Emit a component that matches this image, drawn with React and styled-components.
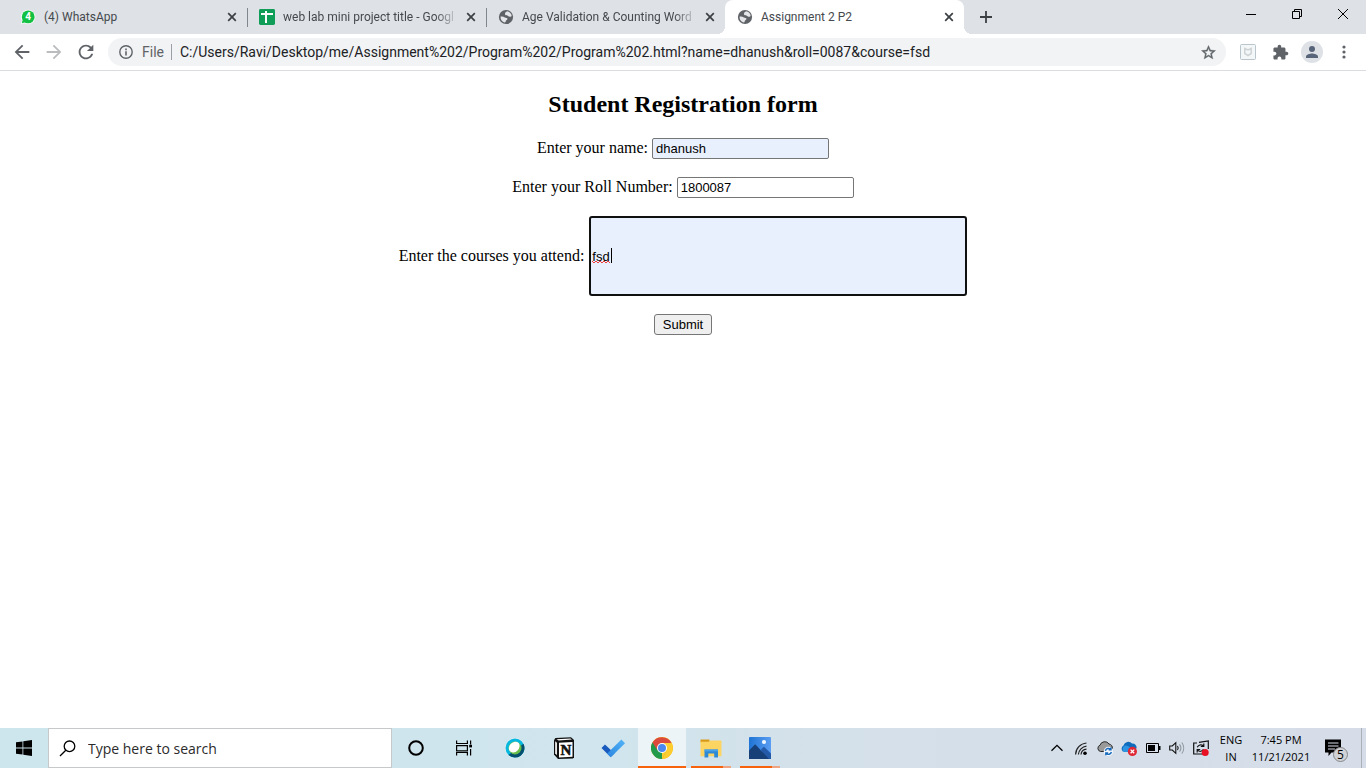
import React from 'react';
import styled, { createGlobalStyle, css } from 'styled-components';

const GlobalStyle = createGlobalStyle`
  *, *::before, *::after { box-sizing: border-box; }
  body { margin: 0; background: #fff; }
  button, input { font-family: inherit; margin: 0; }
  svg { display: block; flex: none; }
`;

const browserFont = 'Roboto, "Open Sans", sans-serif';
const taskbarFont = '"Open Sans", "Noto Sans", sans-serif';

const Screen = styled.div`
  min-height: 100vh;
  display: flex;
  flex-direction: column;
`;

/* ---------- browser chrome ---------- */

const Browser = styled.header`
  font-family: ${browserFont};
`;

const TabStrip = styled.div`
  display: flex;
  height: 34px;
  padding-left: 8px;
  background: #dee1e6;
`;

const Tabs = styled.div`
  display: flex;
  flex: 0 1 956px;
  min-width: 0;
`;

const Tab = styled.div`
  position: relative;
  display: flex;
  align-items: center;
  flex: 1 1 0;
  min-width: 0;
  padding: 0 7px 0 12px;
  color: #45494d;

  ${({ $divider }) => $divider && css`
    &::after {
      content: '';
      position: absolute;
      right: -1px;
      top: 8px;
      width: 1px;
      height: 19px;
      background: #80868b;
    }
  `}

  ${({ $active }) => $active && css`
    background: #fff;
    border-radius: 8px 8px 0 0;
    &::before, &::after {
      content: '';
      position: absolute;
      bottom: 0;
      width: 8px;
      height: 8px;
    }
    &::before {
      left: -8px;
      background: radial-gradient(circle at 0 0, transparent 8px, #fff 8px);
    }
    &::after {
      right: -8px;
      background: radial-gradient(circle at 100% 0, transparent 8px, #fff 8px);
    }
  `}
`;

const TabTitle = styled.button`
  flex: 1;
  min-width: 0;
  height: 34px;
  padding: 0;
  margin-left: 8px;
  border: 0;
  background: none;
  color: inherit;
  font-size: 12px;
  line-height: 16px;
  text-align: left;
  white-space: nowrap;
  overflow: hidden;
  ${({ $fade }) => $fade && css`
    mask-image: linear-gradient(to right, #000 calc(100% - 24px), transparent);
  `}
`;

const IconButton = styled.button`
  display: flex;
  align-items: center;
  justify-content: center;
  flex: none;
  width: ${({ $w }) => $w || 28}px;
  height: ${({ $h }) => $h || 28}px;
  padding: 0;
  border: 0;
  border-radius: ${({ $round }) => ($round ? '50%' : '0')};
  background: none;
  color: ${({ $color }) => $color || '#5f6368'};
`;

const TabClose = styled(IconButton)`
  margin-left: 4px;
`;

const WindowControls = styled.div`
  display: flex;
  margin-left: auto;
`;

const Toolbar = styled.div`
  display: flex;
  align-items: center;
  gap: 8px;
  height: 37px;
  padding: 0 8px;
  background: #fff;
  border-bottom: 1px solid #dadce0;
`;

const ToolGroup = styled.div`
  display: flex;
  align-items: center;
  gap: 4px;
`;

const Omnibox = styled.div`
  display: flex;
  align-items: center;
  flex: 1;
  min-width: 0;
  height: 28px;
  padding: 0 4px 0 10px;
  border-radius: 14px;
  background: #f1f3f4;
  color: #5f6368;
`;

const Scheme = styled.label`
  padding: 0 7px 0 8px;
  font-size: 14px;
  line-height: 16px;
  border-right: 1px solid #9aa0a6;
`;

const UrlInput = styled.input`
  flex: 1;
  min-width: 0;
  height: 28px;
  padding: 0 0 0 8px;
  border: 0;
  outline: 0;
  background: none;
  color: #202124;
  font-size: 14px;
`;

/* ---------- page ---------- */

const Page = styled.main`
  flex: 1;
  padding: 19px 8px;
  font-family: "Liberation Serif", "Times New Roman", serif;
  font-size: 16px;
  color: #000;
`;

const Heading = styled.h2`
  margin: 0 0 20px;
  font-size: 24px;
  line-height: 28px;
  text-align: center;
`;

const Form = styled.form`
  display: flex;
  flex-direction: column;
  align-items: center;
  gap: 18px;
`;

const Field = styled.div`
  display: flex;
  align-items: baseline;
  gap: 4px;
`;

const TextInput = styled.input`
  width: 177px;
  height: 21px;
  padding: 1px 3px;
  border: 1px solid #767676;
  border-radius: 2px;
  background: ${({ $filled }) => ($filled ? '#e8f0fe' : '#fff')};
  color: #000;
  font-family: "Liberation Sans", Arial, sans-serif;
  font-size: 13px;
`;

const CoursesInput = styled(TextInput)`
  width: 378px;
  height: 80px;
  padding: 1px;
  border: 2px solid #101010;
  border-radius: 3px;
  outline: 0;
`;

const CoursesBox = styled.div`
  position: relative;
  display: flex;
  align-items: baseline;
  margin-left: 1px;
`;

const SpellMark = styled.svg`
  position: absolute;
  left: 3px;
  top: 44px;
`;

const Caret = styled.span`
  position: absolute;
  left: 22px;
  top: 32px;
  width: 1px;
  height: 15px;
  background: #000;
`;

const Submit = styled.button`
  width: 58px;
  height: 21px;
  padding: 0;
  border: 1px solid #767676;
  border-radius: 3px;
  background: #efefef;
  color: #000;
  font-family: "Liberation Sans", Arial, sans-serif;
  font-size: 13px;
`;

/* ---------- taskbar ---------- */

const Taskbar = styled.footer`
  display: flex;
  height: 40px;
  background: linear-gradient(to right, #cde5ec, #d0e5ed 45%, #d4e0ea 60%, #d6dde8);
  font-family: ${taskbarFont};
  color: #000;
`;

const SearchBox = styled.label`
  display: flex;
  align-items: center;
  flex: 0 1 344px;
  min-width: 0;
  gap: 12px;
  padding: 0 10px;
  border: 1px solid #c5c9ca;
  background: #fff;
`;

const SearchInput = styled.input`
  flex: 1;
  min-width: 0;
  height: 30px;
  padding: 0;
  border: 0;
  outline: 0;
  background: none;
  font-size: 14px;
  &::placeholder { color: #2b2b2b; opacity: 1; }
`;

const Apps = styled.nav`
  display: flex;
  gap: 1px;
  margin-left: 3px;
`;

const AppButton = styled.button`
  position: relative;
  display: flex;
  align-items: center;
  justify-content: center;
  width: 48px;
  height: 40px;
  padding: 0;
  border: 0;
  color: #000;
  background: ${({ $active }) => ($active ? '#edf4f7' : 'none')};

  ${({ $active, $open }) => ($active || $open) && css`
    &::after {
      content: '';
      position: absolute;
      left: ${$active ? 0 : 4}px;
      right: ${$active ? 0 : 4}px;
      bottom: 0;
      height: 2px;
      background: ${$active
        ? '#f7630c'
        : 'linear-gradient(to right, #f7630c 80%, #f0a582 80%)'};
    }
  `}
`;

const Tray = styled.div`
  display: flex;
  align-items: center;
  margin-left: auto;
`;

const TrayText = styled.div`
  width: ${({ $w }) => $w}px;
  font-size: 11px;
  line-height: 17px;
  text-align: center;
  white-space: nowrap;
`;

const ShowDesktop = styled.button`
  width: 5px;
  height: 40px;
  padding: 0;
  border: 0;
  border-left: 1px solid #aab1b9;
  background: none;
`;

/* ---------- icons ---------- */

const Glyph = ({ size = 16, box = 24, children, ...rest }) => (
  <svg width={size} height={size} viewBox={`0 0 ${box} ${box}`} fill="currentColor" aria-hidden="true" {...rest}>
    {children}
  </svg>
);

const CloseIcon = () => (
  <Glyph box={16} stroke="#3c4043" strokeWidth="1.7">
    <path d="M4.2 4.2l7.6 7.6M11.8 4.2l-7.6 7.6" />
  </Glyph>
);

const WhatsAppIcon = () => (
  <Glyph box={16}>
    <path d="M8.2.7a7.2 7.2 0 1 1-3.5 13.5L.6 15.4l1.3-3.8A7.2 7.2 0 0 1 8.2.7z" fill="#f7fbf8" />
    <circle cx="8.2" cy="7.9" r="6.4" fill="#12c143" />
    <path d="M1.8 14.2l1-3.6 2.6 2.6z" fill="#12c143" />
    <text x="8.2" y="11.4" textAnchor="middle" fontSize="10" fontWeight="700" fontFamily="Roboto, sans-serif" fill="#fff">4</text>
  </Glyph>
);

const SheetsIcon = () => (
  <Glyph box={16}>
    <rect width="16" height="16" rx="1.4" fill="#109d58" />
    <path d="M2 5h12M7 2v12" stroke="#fff" strokeWidth="2" />
  </Glyph>
);

const GlobeIcon = () => (
  <Glyph box={16}>
    <circle cx="8" cy="8" r="7.1" fill="#5f6368" />
    <path d="M2.6 7.5c1.9-.3 3.2.2 4.3.9.9.6 2.4.4 2.6 1.3.2 1-1.2 1.1-1.5 1.9-.2.7-.2 1.4-1 1.8C4.300 13 2.400 10.800 2.600 7.500z" fill="#e4e6e9" />
    <path d="M9 2.3c-.6.9-1.900 1-1.900 1.900 0 .8-.4 1.200.3 1.700.8.5 1.700.2 2.500.8.8.6 1.500 1.300 2.400 1.100.6-.1 1-.4 1.400-.7C13.500 4.600 11.600 2.500 9 2.300z" fill="#e4e6e9" />
  </Glyph>
);

const ArrowBack = (props) => (
  <Glyph size={22} {...props}>
    <path d="M20 11H7.830l5.590-5.590L12 4l-8 8 8 8 1.410-1.410L7.830 13H20v-2z" />
  </Glyph>
);

const ReloadIcon = () => (
  <Glyph size={22}>
    <path d="M17.650 6.350C16.200 4.900 14.210 4 12 4c-4.420 0-7.990 3.580-7.990 8s3.570 8 7.990 8c3.730 0 6.840-2.550 7.730-6h-2.080c-.82 2.330-3.040 4-5.650 4-3.310 0-6-2.690-6-6s2.690-6 6-6c1.660 0 3.140.69 4.220 1.780L13 11h7V4l-2.350 2.350z" />
  </Glyph>
);

const InfoIcon = () => (
  <Glyph box={16}>
    <circle cx="8" cy="8" r="6.200" fill="none" stroke="currentColor" strokeWidth="1.400" />
    <path d="M7.200 7.200h1.600v4.200H7.200zM7.200 4.600h1.600v1.600H7.200z" />
  </Glyph>
);

const StarIcon = () => (
  <Glyph size={17} stroke="currentColor" strokeWidth=".5">
    <path d="M22 9.240l-7.190-.62L12 2 9.190 8.630 2 9.240l5.460 4.730L5.820 21 12 17.270 18.180 21l-1.630-7.030L22 9.240zM12 15.400l-3.760 2.270 1-4.280-3.320-2.880 4.380-.38L12 6.100l1.710 4.040 4.380.38-3.320 2.880 1 4.280L12 15.400z" />
  </Glyph>
);

const ShieldIcon = () => (
  <Glyph box={16}>
    <rect x=".5" y=".5" width="15" height="15" rx="1" fill="#f4f7f8" stroke="#b9c5ca" />
    <path d="M4.800 4.500L8 6l3.200-1.500v5L8 11.500 4.800 9.500z" fill="none" stroke="#ced3d6" strokeWidth="1.500" />
  </Glyph>
);

const PuzzleIcon = () => (
  <Glyph size={17}>
    <path d="M20.500 11H19V7c0-1.100-.9-2-2-2h-4V3.500C13 2.120 11.880 1 10.500 1S8 2.120 8 3.500V5H4c-1.100 0-1.990.9-1.990 2v3.800H3.500c1.490 0 2.700 1.210 2.700 2.700s-1.210 2.700-2.700 2.700H2V20c0 1.100.9 2 2 2h3.800v-1.500c0-1.490 1.210-2.700 2.700-2.700 1.490 0 2.700 1.210 2.700 2.700V22H17c1.100 0 2-.9 2-2v-4h1.500c1.380 0 2.500-1.120 2.500-2.500S21.880 11 20.500 11z" />
  </Glyph>
);

const AvatarIcon = () => (
  <Glyph size={22} box={22}>
    <circle cx="11" cy="11" r="11" fill="#dee1e6" />
    <circle cx="11" cy="8" r="3" fill="#57647a" />
    <path d="M5 17v-1.600c0-2 4-3 6-3s6 1 6 3V17z" fill="#57647a" />
  </Glyph>
);

const MenuIcon = () => (
  <Glyph box={16}>
    <circle cx="8" cy="3" r="1.600" />
    <circle cx="8" cy="8" r="1.600" />
    <circle cx="8" cy="13" r="1.600" />
  </Glyph>
);

const StartIcon = () => (
  <Glyph box={16}>
    <path d="M0 2.300L6.500 1.400V7.600H0zM7.300 1.300L16 0v7.600H7.300zM0 8.400h6.500v6.200L0 13.700zM7.300 8.400H16V16l-8.700-1.300z" />
  </Glyph>
);

const SearchIcon = () => (
  <Glyph size={17} box={17} fill="none" stroke="#000" strokeWidth="1.300">
    <circle cx="10.500" cy="6.300" r="5.300" />
    <path d="M6.800 10.200L1 16" />
  </Glyph>
);

const CortanaIcon = () => (
  <Glyph fill="none" box={16} stroke="#000" strokeWidth="2">
    <circle cx="8" cy="8" r="6.800" />
  </Glyph>
);

const TaskViewIcon = () => (
  <Glyph box={16} fill="none" stroke="#000" strokeWidth="1.200">
    <path d="M.6.500v3h10.800v-3M.6 15.500v-3h10.800v3M.6 5.600h10.800v5.200H.6zM14.600.500v4M14.600 9v6.500" />
    <path d="M13.200 4.800h3v2.600h-3z" fill="#000" stroke="none" />
  </Glyph>
);

const WebexIcon = () => (
  <Glyph size={20} box={20}>
    <circle cx="10" cy="10" r="10" fill="#e6f3f7" />
    <circle cx="10" cy="10" r="9.500" fill="#07b7e0" />
    <path d="M18.500 5.800A9.500 9.500 0 0 1 3.500 17z" fill="#04506e" />
    <circle cx="10" cy="10" r="6.500" fill="#6abf4b" />
    <ellipse cx="9.200" cy="9.100" rx="6" ry="4.700" fill="#fff" transform="rotate(-45 9.200 9.100)" />
  </Glyph>
);

const NotionIcon = () => (
  <Glyph size={22} box={22}>
    <path d="M1 3.200L2.400 1l15.600-.8 3 2.800v17.200l-1 1.200-15 .6L1 17.500z" fill="#111" />
    <path d="M3.500 2.200l13.800-.8 1.600 1.200-13.200.8z" fill="#fff" />
    <path d="M2.200 4.200l1.700 1.500v12.500L2.200 16.300z" fill="#fff" />
    <path d="M6 5.700l13.500-.8v14.800L6 20.400z" fill="#fff" />
    <text x="12.800" y="18" textAnchor="middle" fontSize="15" fontWeight="700" fontFamily="Liberation Serif, serif" fill="#111" stroke="#111" strokeWidth=".6">N</text>
  </Glyph>
);

const TodoIcon = () => (
  <Glyph size={24}>
    <defs>
      <linearGradient id="todo" x1="0" y1="1" x2="1" y2="0">
        <stop offset="0" stopColor="#2a86e0" />
        <stop offset="1" stopColor="#53b4f7" />
      </linearGradient>
    </defs>
    <path d="M4 8.500L.500 12l9 9 4-3.500z" fill="#185abd" />
    <path d="M20.400 3.500L24 7.200 9.800 21.200 6.200 17.500z" fill="url(#todo)" />
  </Glyph>
);

const ChromeIcon = () => (
  <Glyph size={22} box={22}>
    <circle cx="11" cy="11" r="11" fill="#fbc116" />
    <path d="M11 11L1.470 5.500A11 11 0 0 0 11 22l5-8z" fill="#229a4c" />
    <path d="M11 11V6h9.530A11 11 0 0 0 1.470 5.500L6.700 13.500z" fill="#db4a3c" />
    <path d="M11 22l4.800-8.300L20.500 6H11v5z" fill="#fdcc2f" />
    <path d="M20.530 6A11 11 0 0 1 11 22l4.600-8.200z" fill="#fdcc2f" />
    <circle cx="11" cy="11" r="5" fill="#fff" />
    <circle cx="11" cy="11" r="4" fill="#4b87ee" />
  </Glyph>
);

const ExplorerIcon = () => (
  <Glyph size={22} box={22}>
    <path d="M.500 2.500h9v3h-9z" fill="#d99a1a" />
    <path d="M.500 4.800h8.300l1.600-1.300h11.100v15.700H.500z" fill="#fcd462" />
    <path d="M4.500 20.500v-8h13.500v8h-3.800v-3.900H8.300v3.900z" fill="#2f8ad6" />
    <path d="M4.500 12.500h13.500v1.800H4.500z" fill="#4aa3e8" />
  </Glyph>
);

const PhotosIcon = () => (
  <Glyph size={22} box={22}>
    <defs>
      <linearGradient id="sky" x1="0" y1="0" x2="1" y2="0">
        <stop offset="0" stopColor="#1f74d4" />
        <stop offset="1" stopColor="#5a9df2" />
      </linearGradient>
    </defs>
    <rect width="22" height="22" rx="1" fill="url(#sky)" />
    <path d="M12 12.500l3-2.700 7 6.700V22h-6z" fill="#255aa8" />
    <path d="M0 13.500l6.200-6.200L20 22H0z" fill="#173f78" />
    <circle cx="15" cy="5" r="2.100" fill="#eef7ff" />
  </Glyph>
);

const ChevronIcon = () => (
  <Glyph box={16} fill="none" stroke="#000" strokeWidth="1.300">
    <path d="M2.500 10.800L8 5.300l5.500 5.500" />
  </Glyph>
);

const WifiIcon = () => (
  <Glyph box={16} fill="none" stroke="#222" strokeWidth="1.200">
    <path d="M2.600 14.500A11.800 11.800 0 0 1 13.500 3M5.400 14.500a9 9 0 0 1 8.100-8.300M8 14.500a6 6 0 0 1 5.500-5.300" />
    <circle cx="12" cy="13.200" r="1.800" fill="#000" stroke="none" />
  </Glyph>
);

const CloudSyncIcon = () => (
  <Glyph box={16}>
    <path d="M3.500 11.500A3.300 3.300 0 0 1 3 5.200 5 5 0 0 1 12 4a3.800 3.800 0 0 1 3.300 4.500l-5 3z" fill="#9a9a9a" stroke="#2a2a2a" />
    <circle cx="11.400" cy="11.400" r="4.600" fill="#f4f8fc" />
    <path d="M8.400 10.800a3 3 0 0 1 5.200-1.300M14.400 12a3 3 0 0 1-5.200 1.300M14 7.500v2.400h-2.400M8.800 15.300v-2.400h2.400" fill="none" stroke="#1669bd" strokeWidth="1.400" />
  </Glyph>
);

const OneDriveIcon = () => (
  <Glyph box={16}>
    <path d="M3.500 12A3.400 3.400 0 0 1 2.500 5.600 5 5 0 0 1 11 3.500a4 4 0 0 1 4.500 4.700L11 12z" fill="#0f6cbd" />
    <path d="M3.500 12a3.400 3.400 0 0 1 .500-6.300c2-.5 3.500.8 6 2.500L8 12z" fill="#2d94e4" />
    <circle cx="11.400" cy="11.400" r="4.600" fill="#df2935" />
    <path d="M9.600 9.600l3.600 3.600M13.200 9.600l-3.600 3.600" stroke="#fff" strokeWidth="1.300" />
  </Glyph>
);

const BatteryIcon = () => (
  <Glyph box={16}>
    <path d="M1.500 3.500h12v9h-12z" fill="none" stroke="#000" />
    <path d="M3 5h7v6H3zM14 6h1.500v4H14z" />
  </Glyph>
);

const VolumeIcon = () => (
  <Glyph box={16} fill="none" stroke="#111" strokeWidth="1.100">
    <path d="M.700 6h2.600L6.800 2.700v10.600L3.300 10H.700z" />
    <path d="M8.500 6a3.500 3.500 0 0 1 0 4" />
    <path d="M10.500 4.300a6 6 0 0 1 0 7.400M12.800 2.500a9 9 0 0 1 0 11" stroke="#8e959d" />
  </Glyph>
);

const UpdateIcon = () => (
  <Glyph box={16}>
    <path d="M10 14H.700V3H4M6 2.300L15.300.900v8" fill="none" stroke="#111" strokeWidth="1.200" />
    <path d="M4.300 7.300a3.600 3.600 0 0 1 6-1.300M10.800 3.500v3h-3M10.500 9.300a3.600 3.600 0 0 1-5.800.9M4.200 12.500v-3h3" fill="none" stroke="#111" strokeWidth="1.200" />
    <circle cx="12.200" cy="12.500" r="3.500" fill="#e81123" />
  </Glyph>
);

const NotificationIcon = () => (
  <Glyph size={28} box={28}>
    <path d="M2 5.500h16v13h-9.500L5.500 22v-3.500H2z" />
    <path d="M5 9h10.500M5 12h10.500M5 15h7" stroke="#d6dde8" />
    <circle cx="17.500" cy="20.500" r="7" fill="#d0d2d5" stroke="#85888b" />
    <text x="17.500" y="24.600" textAnchor="middle" fontSize="12" fontFamily="Open Sans, sans-serif" fill="#000">5</text>
  </Glyph>
);

const MinimizeIcon = () => (
  <Glyph size={12} box={12}><path d="M1 6h10v1H1z" /></Glyph>
);

const RestoreIcon = () => (
  <Glyph size={12} box={12} fill="none" stroke="#000">
    <path d="M1.500 3.500h7v7h-7zM3.500 3.500v-2h7v7h-2" />
  </Glyph>
);

const WindowCloseIcon = () => (
  <Glyph size={12} box={12} stroke="#000"><path d="M1 1l10 10M11 1L1 11" /></Glyph>
);

const PlusIcon = () => (
  <Glyph box={16} stroke="#3c4043" strokeWidth="1.800"><path d="M8 2v12M2 8h12" /></Glyph>
);

/* ---------- data ---------- */

const tabs = [
  { title: '(4) WhatsApp', Icon: WhatsAppIcon, divider: true },
  { title: 'web lab mini project title - Googl', Icon: SheetsIcon, divider: true, fade: true },
  { title: 'Age Validation & Counting Word', Icon: GlobeIcon, fade: true },
  { title: 'Assignment 2 P2', Icon: GlobeIcon, active: true },
];

const apps = [
  { name: 'Webex', Icon: WebexIcon },
  { name: 'Notion', Icon: NotionIcon },
  { name: 'To Do', Icon: TodoIcon },
  { name: 'Chrome', Icon: ChromeIcon, active: true },
  { name: 'File Explorer', Icon: ExplorerIcon, open: true },
  { name: 'Photos', Icon: PhotosIcon, open: true },
];

const trayItems = [
  ['Show hidden icons', ChevronIcon],
  ['Network', WifiIcon],
  ['Sync', CloudSyncIcon],
  ['OneDrive', OneDriveIcon],
  ['Battery', BatteryIcon],
  ['Volume', VolumeIcon],
  ['Update', UpdateIcon],
];

export default function App() {
  return (
    <Screen>
      <GlobalStyle />
      <Browser>
        <TabStrip>
          <Tabs role="tablist">
            {tabs.map(({ title, Icon, divider, fade, active }) => (
              <Tab key={title} $divider={divider} $active={active}>
                <Icon />
                <TabTitle role="tab" aria-selected={!!active} $fade={fade}>{title}</TabTitle>
                <TabClose $w={16} $h={16} aria-label="Close tab"><CloseIcon /></TabClose>
              </Tab>
            ))}
          </Tabs>
          <IconButton $w={44} $h={34} aria-label="New tab"><PlusIcon /></IconButton>
          <WindowControls>
            <IconButton $w={46} $color="#000" aria-label="Minimize"><MinimizeIcon /></IconButton>
            <IconButton $w={46} $color="#000" aria-label="Restore"><RestoreIcon /></IconButton>
            <IconButton $w={46} $color="#000" aria-label="Close"><WindowCloseIcon /></IconButton>
          </WindowControls>
        </TabStrip>
        <Toolbar>
          <ToolGroup>
            <IconButton aria-label="Back"><ArrowBack /></IconButton>
            <IconButton $color="#babcbe" aria-label="Forward"><ArrowBack transform="rotate(180)" /></IconButton>
            <IconButton aria-label="Reload"><ReloadIcon /></IconButton>
          </ToolGroup>
          <Omnibox>
            <InfoIcon />
            <Scheme htmlFor="url">File</Scheme>
            <UrlInput
              id="url"
              spellCheck={false}
              defaultValue="C:/Users/Ravi/Desktop/me/Assignment%202/Program%202/Program%202.html?name=dhanush&roll=0087&course=fsd"
            />
            <IconButton aria-label="Bookmark this tab"><StarIcon /></IconButton>
          </Omnibox>
          <ToolGroup>
            <IconButton aria-label="WebAdvisor"><ShieldIcon /></IconButton>
            <IconButton aria-label="Extensions"><PuzzleIcon /></IconButton>
            <IconButton $round aria-label="Profile"><AvatarIcon /></IconButton>
            <IconButton aria-label="Menu"><MenuIcon /></IconButton>
          </ToolGroup>
        </Toolbar>
      </Browser>

      <Page>
        <Heading>Student Registration form</Heading>
        <Form onSubmit={(e) => e.preventDefault()}>
          <Field>
            <label htmlFor="name">Enter your name:</label>
            <TextInput id="name" name="name" defaultValue="dhanush" $filled />
          </Field>
          <Field>
            <label htmlFor="roll">Enter your Roll Number:</label>
            <TextInput id="roll" name="roll" defaultValue="1800087" />
          </Field>
          <Field>
            <label htmlFor="course">Enter the courses you attend:</label>
            <CoursesBox>
              <CoursesInput id="course" name="course" defaultValue="fsd" $filled />
              <SpellMark width="18" height="4" viewBox="0 0 18 4" fill="none" stroke="#f03c3c" aria-hidden="true">
                <path d="M0 1l2 2 2-2 2 2 2-2 2 2 2-2 2 2 2-2 2 2" />
              </SpellMark>
              <Caret />
            </CoursesBox>
          </Field>
          <Submit type="submit">Submit</Submit>
        </Form>
      </Page>

      <Taskbar>
        <AppButton aria-label="Start"><StartIcon /></AppButton>
        <SearchBox>
          <SearchIcon />
          <SearchInput placeholder="Type here to search" aria-label="Search" />
        </SearchBox>
        <AppButton aria-label="Cortana"><CortanaIcon /></AppButton>
        <AppButton aria-label="Task view"><TaskViewIcon /></AppButton>
        <Apps>
          {apps.map(({ name, Icon, active, open }) => (
            <AppButton key={name} aria-label={name} $active={active} $open={open}><Icon /></AppButton>
          ))}
        </Apps>
        <Tray>
          {trayItems.map(([name, Icon]) => (
            <IconButton key={name} $w={24} $h={40} $color="#000" aria-label={name}><Icon /></IconButton>
          ))}
          <TrayText $w={36}>ENG<br />IN</TrayText>
          <TrayText $w={64}>7:45 PM<br />11/21/2021</TrayText>
          <IconButton $w={48} $h={40} $color="#000" aria-label="Notifications"><NotificationIcon /></IconButton>
          <ShowDesktop aria-label="Show desktop" />
        </Tray>
      </Taskbar>
    </Screen>
  );
}
